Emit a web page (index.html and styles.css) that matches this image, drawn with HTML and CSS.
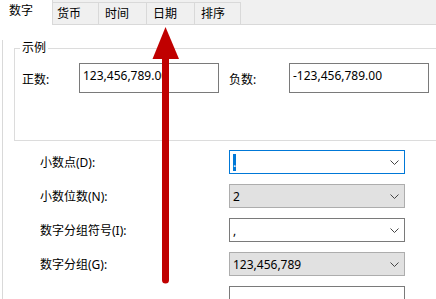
FILE: index.html
```html
<!DOCTYPE html>
<html lang="zh-CN">
<head>
  <meta charset="UTF-8">
  <title>自定义格式</title>
  <link rel="stylesheet" href="styles.css">
</head>
<body>
  <!-- Tabs -->
  <div class="tabs">
    <div class="tab active">数字</div>
    <div class="tab t2">货币</div>
    <div class="tab t3">时间</div>
    <div class="tab t4">日期</div>
    <div class="tab t5">排序</div>
  </div>

  <!-- Panel -->
  <div class="panel">
    <fieldset class="sample">
      <legend>示例</legend>
      <div class="sample-row">
        <span class="sample-label">正数:</span>
        <div class="textbox">123,456,789.00</div>
        <span class="sample-label neg">负数:</span>
        <div class="textbox">-123,456,789.00</div>
      </div>
    </fieldset>

    <div class="settings">
      <span class="label">小数点(D):</span>
      <div class="combo focused">
        <span class="selected">.</span>
        <svg class="chevron" width="9" height="5" viewBox="0 0 9 5"><path d="M0.5 0.5 L4.5 4.5 L8.5 0.5" fill="none" stroke="#444" stroke-width="1"/></svg>
      </div>

      <span class="label">小数位数(N):</span>
      <div class="combo locked">
        <span>2</span>
        <svg class="chevron" width="9" height="5" viewBox="0 0 9 5"><path d="M0.5 0.5 L4.5 4.5 L8.5 0.5" fill="none" stroke="#444" stroke-width="1"/></svg>
      </div>

      <span class="label">数字分组符号(I):</span>
      <div class="combo">
        <span>,</span>
        <svg class="chevron" width="9" height="5" viewBox="0 0 9 5"><path d="M0.5 0.5 L4.5 4.5 L8.5 0.5" fill="none" stroke="#444" stroke-width="1"/></svg>
      </div>

      <span class="label">数字分组(G):</span>
      <div class="combo locked">
        <span>123,456,789</span>
        <svg class="chevron" width="9" height="5" viewBox="0 0 9 5"><path d="M0.5 0.5 L4.5 4.5 L8.5 0.5" fill="none" stroke="#444" stroke-width="1"/></svg>
      </div>

      <span class="label"></span>
      <div class="combo"></div>
    </div>
  </div>

  <!-- Annotation arrow -->
  <svg class="arrow" width="436" height="299" viewBox="0 0 436 299">
    <polygon points="165.5,27 152.5,59 179,59" fill="#c00000"/>
    <path d="M162 58 H169 V280 Q169 283.5 165.5 283.5 Q162 283.5 162 280 Z" fill="#c00000"/>
  </svg>
</body>
</html>
```

FILE: styles.css
```css
body {
  margin: 0;
  width: 436px;
  height: 299px;
  overflow: hidden;
  position: relative;
  background: #fff;
  color: #000;
  font-family: "Noto Sans", "Noto Sans CJK SC", sans-serif;
  font-size: 12px;
}

/* Tabs */
.tabs {
  display: flex;
  align-items: flex-end;
  height: 24px;
  background: #f0f0f0;
  border-bottom: 1px solid #d9d9d9;
}

.tab {
  box-sizing: border-box;
  height: 22px;
  padding: 3px 0 0 6px;
  line-height: 16px;
  border: 1px solid #d9d9d9;
  border-left: 0;
  border-bottom: 0;
  background: #f0f0f0;
}

.tab.active {
  width: 53px;
  height: 25px;
  margin-bottom: -1px;
  padding: 3px 0 0 9px;
  background: #fff;
  border-top: 0;
}

.t2 { width: 46px; padding-left: 4px; }
.t3 { width: 48px; }
.t4 { width: 48px; }
.t5 { width: 46px; }

/* Panel */
.panel {
  margin-left: 2px;
  height: 268px;
  border-left: 1px solid #d9d9d9;
}

.sample {
  box-sizing: border-box;
  width: 422px;
  margin: 15px 0 0 11px;
  padding: 0 0 47px 7px;
  border: 1px solid #dcdcdc;
  border-right: 0;
}

.sample legend {
  padding: 0 2px;
  margin-left: -2px;
  line-height: 16px;
  color: #000;
}

.sample-row {
  display: flex;
  align-items: center;
  margin-top: 7px;
}

.sample-label {
  width: 57px;
  padding-top: 2px;
}

.sample-label.neg {
  width: 60px;
  margin-left: 10px;
}

.textbox {
  box-sizing: border-box;
  width: 140px;
  height: 30px;
  padding: 4px 0 0 3px;
  line-height: 16px;
  border: 1px solid #7a7a7a;
}

/* Settings */
.settings {
  display: grid;
  grid-template-columns: 189px 176px;
  row-gap: 10px;
  align-items: center;
  margin-top: 9px;
  padding-left: 37px;
}

.combo {
  box-sizing: border-box;
  height: 24px;
  display: flex;
  align-items: center;
  justify-content: space-between;
  padding: 0 5px 0 3px;
  border: 1px solid #7a7a7a;
  background: #fff;
}

.combo.focused {
  border-color: #0078d7;
}

.combo.locked {
  background: #e1e1e1;
  border-color: #adadad;
}

.combo.focused .selected {
  display: inline-block;
  width: 3px;
  height: 17px;
  line-height: 17px;
  background: #0078d7;
  color: #fff;
  overflow: hidden;
}

.chevron {
  display: block;
  margin-left: auto;
}

/* Annotation overlay */
.arrow {
  position: absolute;
  left: 0;
  top: 0;
  pointer-events: none;
}
```
